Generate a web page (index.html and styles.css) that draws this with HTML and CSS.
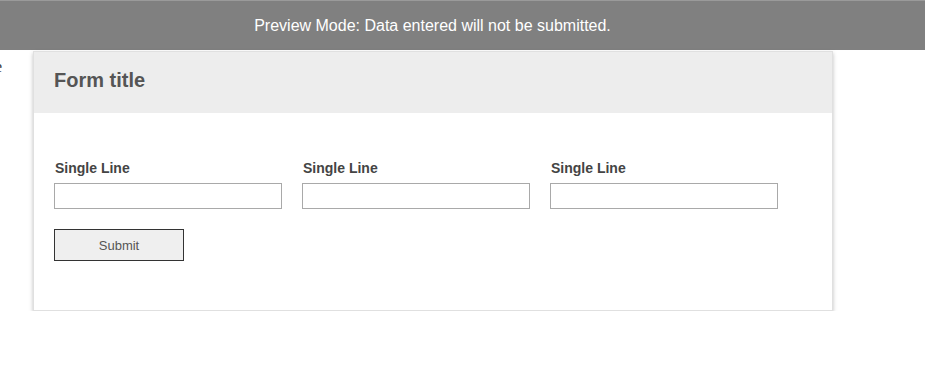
FILE: index.html
```html
<!DOCTYPE html>
<html>
<head>
<meta charset="utf-8">
<link rel="stylesheet" href="styles.css">
</head>
<body>
<div class="banner">Preview Mode: Data entered will not be submitted.</div>
<span class="stray">e</span>
<div class="card">
  <div class="card-head"><h1 class="title">Form title</h1></div>
  <div class="card-body">
    <div class="row">
      <div class="field"><label class="label">Single Line</label><input class="input" type="text"></div>
      <div class="field"><label class="label">Single Line</label><input class="input" type="text"></div>
      <div class="field"><label class="label">Single Line</label><input class="input" type="text"></div>
    </div>
    <button class="submit" type="button">Submit</button>
  </div>
</div>
</body>
</html>
```
FILE: styles.css
```css
html, body { margin: 0; padding: 0; background: #fff; }
body { font-family: "Liberation Sans", Arial, sans-serif; position: relative; }
.banner {
  height: 50px;
  box-sizing: border-box;
  background: #808080;
  border-top: 1px solid #9a9a9a;
  color: #fff;
  font-size: 16px;
  display: flex;
  align-items: center;
  justify-content: center;
  padding-right: 60px;
}
.stray {
  position: absolute;
  left: -5px;
  top: 58px;
  font-family: "Liberation Serif", serif;
  font-size: 16px;
  color: #333;
}
.card {
  width: 800px;
  margin: 1px 0 0 33px;
  box-sizing: border-box;
  border: 1px solid #e0e0e0;
  box-shadow: 0 2px 4px rgba(0,0,0,0.25);
  background: #fff;
}
.card-head {
  background: #ededed;
  height: 61px;
  display: flex;
  align-items: center;
  padding: 0 20px;
}
.title {
  margin: 0;
  font-size: 20px;
  font-weight: bold;
  color: #555;
  padding-bottom: 4px;
}
.card-body {
  padding: 45px 20px 49px;
}
.row {
  display: flex;
  gap: 20px;
}
.field { display: flex; flex-direction: column; width: 228px; }
.label {
  font-size: 14px;
  font-weight: bold;
  color: #444;
  line-height: 17px;
  margin-bottom: 6px;
  padding-left: 1px;
  padding-top: 3px;
  margin-top: -1px;
}
.input {
  box-sizing: border-box;
  width: 228px;
  height: 26px;
  border: 1px solid #a9a9a9;
  margin: 0;
  padding: 0 4px;
  background: #fff;
}
.submit {
  display: block;
  margin-top: 20px;
  width: 130px;
  height: 32px;
  box-sizing: border-box;
  border: 1px solid #333;
  background: #efefef;
  color: #555;
  font-family: "Liberation Sans", Arial, sans-serif;
  font-size: 13px;
  padding: 0;
}
```
